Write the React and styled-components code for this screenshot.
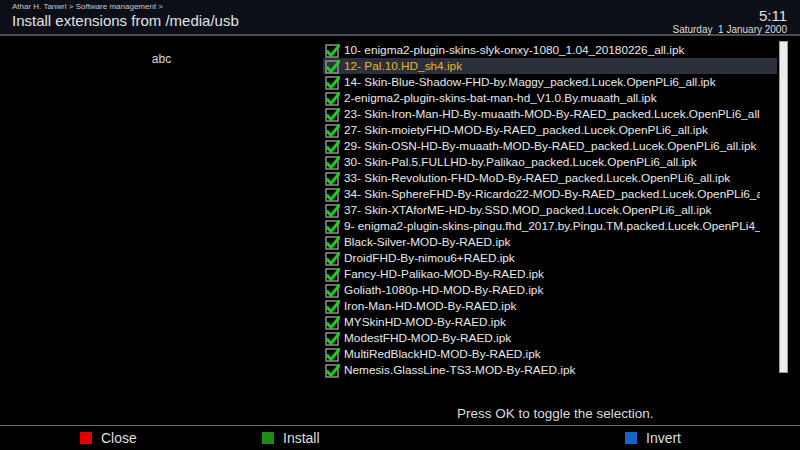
import React from 'react'
import styled, { createGlobalStyle } from 'styled-components'

const Global = createGlobalStyle`
    html, body {
        margin: 0;
        padding: 0;
        background: #000;
    }
    body {
        font-family: "Liberation Sans", Arial, sans-serif;
    }
`

const Screen = styled.div`
    width: 800px;
    height: 450px;
    background: #000;
    color: #e6e6e6;
    display: flex;
    flex-direction: column;
    overflow: hidden;
`

const Header = styled.header`
    height: 34px;
    background: #0c0f17;
    border-bottom: 2px solid #4a4c52;
    display: flex;
    justify-content: space-between;
    padding: 0 13px 0 12px;
`

const TitleBlock = styled.div`
    display: flex;
    flex-direction: column;
`

const Crumbs = styled.div`
    font-size: 8px;
    line-height: 10px;
    margin-top: 2px;
    color: #c8c8c8;
`

const Title = styled.h1`
    margin: 0;
    font-size: 15px;
    line-height: 18px;
    font-weight: normal;
    color: #e2e2e2;
`

const ClockBlock = styled.div`
    display: flex;
    flex-direction: column;
    align-items: flex-end;
`

const Time = styled.div`
    font-size: 15px;
    line-height: 16px;
    margin-top: 8px;
    color: #e2e2e2;
`

const DateText = styled.div`
    font-size: 10px;
    line-height: 11px;
    color: #dcdcdc;
`

const Body = styled.main`
    flex: 1;
    display: grid;
    grid-template-columns: 323px 1fr;
    padding-top: 5px;
`

const Side = styled.div`
    display: flex;
    justify-content: center;
    padding-top: 11px;
    font-size: 12px;
    color: #d8d8d8;
`

const ListArea = styled.div`
    display: flex;
    flex-direction: column;
`

const ListRow = styled.div`
    display: flex;
    gap: 2px;
`

const List = styled.ul`
    list-style: none;
    margin: 0;
    padding: 1px 0 0;
    width: 454px;
    height: 338px;
    overflow: hidden;
`

const Item = styled.li`
    height: 16px;
    display: flex;
    align-items: center;
    gap: 4px;
    padding-left: 2px;
    font-size: 11.8px;
    white-space: nowrap;
    color: ${p => (p.$active ? '#e6b628' : '#e8e8e8')};
    background: ${p => (p.$active ? '#2c2f3c' : 'transparent')};
`

const Name = styled.span`
    width: 416px;
    overflow: hidden;
`

const Scrollbar = styled.div`
    width: 7px;
    height: 330px;
    background: #ececec;
    border: 1px solid #9a9a9a;
`

const Hint = styled.div`
    margin-top: 26px;
    padding-left: 134px;
    font-size: 13.5px;
    color: #dcdcdc;
`

const Footer = styled.footer`
    height: 23px;
    border-top: 1px solid #6a6a6a;
    display: grid;
    grid-template-columns: 182px 363px 1fr;
    align-items: center;
    padding-left: 80px;
    padding-bottom: 1px;
`

const Key = styled.div`
    display: flex;
    align-items: center;
    gap: 9px;
    font-size: 14px;
    color: #dedede;
`

const Swatch = styled.span`
    width: 12px;
    height: 12px;
    background: ${p => p.$color};
`

const CheckIcon = styled.svg`
    flex-shrink: 0;
`

function Check () {
    return (
        <CheckIcon width="15" height="15" viewBox="0 0 15 15">
            <rect x="1" y="2" width="12" height="12" fill="none" stroke="#9a9a9a" strokeWidth="1.4" />
            <path d="M2.5 8.5 L6 12.5 L14 2.5" fill="none" stroke="#22c91e" strokeWidth="3" strokeLinecap="round" strokeLinejoin="round" />
        </CheckIcon>
    )
}

const files = [
    '10- enigma2-plugin-skins-slyk-onxy-1080_1.04_20180226_all.ipk',
    '12- Pal.10.HD_sh4.ipk',
    '14- Skin-Blue-Shadow-FHD-by.Maggy_packed.Lucek.OpenPLi6_all.ipk',
    '2-enigma2-plugin-skins-bat-man-hd_V1.0.By.muaath_all.ipk',
    '23- Skin-Iron-Man-HD-By-muaath-MOD-By-RAED_packed.Lucek.OpenPLi6_all.ipk',
    '27- Skin-moietyFHD-MOD-By-RAED_packed.Lucek.OpenPLi6_all.ipk',
    '29- Skin-OSN-HD-By-muaath-MOD-By-RAED_packed.Lucek.OpenPLi6_all.ipk',
    '30- Skin-Pal.5.FULLHD-by.Palikao_packed.Lucek.OpenPLi6_all.ipk',
    '33- Skin-Revolution-FHD-MoD-By-RAED_packed.Lucek.OpenPLi6_all.ipk',
    '34- Skin-SphereFHD-By-Ricardo22-MOD-By-RAED_packed.Lucek.OpenPLi6_all.ipk',
    '37- Skin-XTAforME-HD-by.SSD.MOD_packed.Lucek.OpenPLi6_all.ipk',
    '9- enigma2-plugin-skins-pingu.fhd_2017.by.Pingu.TM.packed.Lucek.OpenPLi4_all.ipk',
    'Black-Silver-MOD-By-RAED.ipk',
    'DroidFHD-By-nimou6+RAED.ipk',
    'Fancy-HD-Palikao-MOD-By-RAED.ipk',
    'Goliath-1080p-HD-MOD-By-RAED.ipk',
    'Iron-Man-HD-MOD-By-RAED.ipk',
    'MYSkinHD-MOD-By-RAED.ipk',
    'ModestFHD-MOD-By-RAED.ipk',
    'MultiRedBlackHD-MOD-By-RAED.ipk',
    'Nemesis.GlassLine-TS3-MOD-By-RAED.ipk',
]

export default function App () {
    return <Screen>
        <Global />
        <Header>
            <TitleBlock>
                <Crumbs>Athar H. Tanwri &gt; Software management &gt;</Crumbs>
                <Title>Install extensions from /media/usb</Title>
            </TitleBlock>
            <ClockBlock>
                <Time>5:11</Time>
                <DateText>Saturday&nbsp;&nbsp;1 January 2000</DateText>
            </ClockBlock>
        </Header>
        <Body>
            <Side>abc</Side>
            <ListArea>
                <ListRow>
                    <List>
                        {files.map((f, i) => (
                            <Item key={f} $active={i === 1}>
                                <Check />
                                <Name>{f}</Name>
                            </Item>
                        ))}
                    </List>
                    <Scrollbar />
                </ListRow>
                <Hint>Press OK to toggle the selection.</Hint>
            </ListArea>
        </Body>
        <Footer>
            <Key><Swatch $color="#e00000" />Close</Key>
            <Key><Swatch $color="#1f8a14" />Install</Key>
            <Key><Swatch $color="#1565c8" />Invert</Key>
        </Footer>
    </Screen>
}
